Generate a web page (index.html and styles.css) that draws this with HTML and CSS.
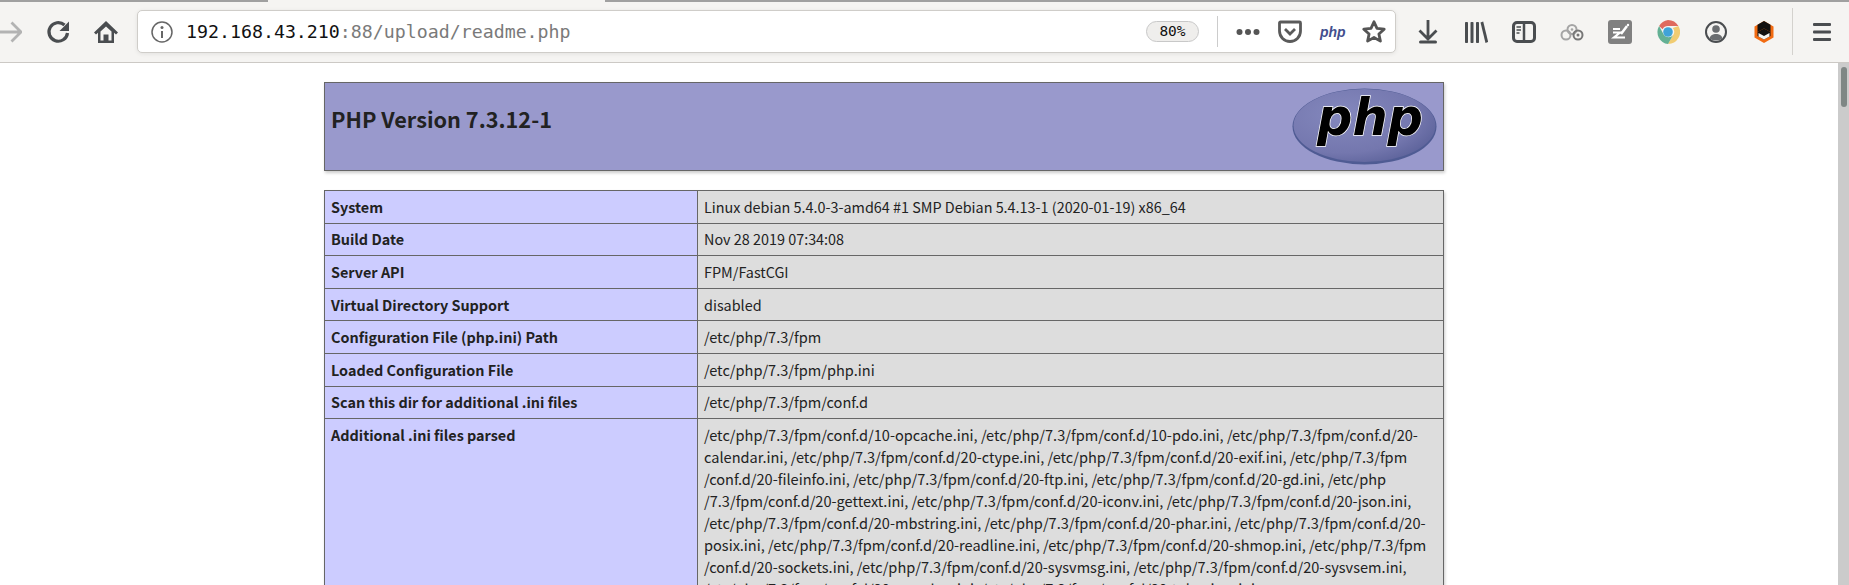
FILE: index.html
```html
<!DOCTYPE html>
<html lang="en">
<head>
    <meta charset="UTF-8">
    <title>phpinfo()</title>
    <link rel="stylesheet" href="styles.css">
</head>
<body>
    <div class="tabline">
        <span class="tabline-left"></span>
        <span class="tabline-gap"></span>
        <span class="tabline-right"></span>
    </div>
    <div class="toolbar">
        <div class="nav">
            <svg class="ico ico-back" viewBox="0 0 24 24"><path d="M0 12h23M13.500 2.500 23 12l-9.500 9.500" fill="none" stroke="#b3b3b3" stroke-width="2.800"/></svg>
            <svg class="ico" viewBox="0 0 24 24"><path d="M21.500 13a9.300 9.300 0 1 1-3-8" fill="none" stroke="#4a4d50" stroke-width="3.200"/><path d="M23 1.500v9.500h-9.500z" fill="#4a4d50"/></svg>
            <svg class="ico" viewBox="0 0 24 24"><path d="M12 1 0 12.500l2 2 2-1.800V23h16v-10.300l2 1.800 2-2z" fill="#4a4d50"/><path d="M12 6.500 6.500 11.500V20.500H9.500V14.500h5V20.500h3V11.500z" fill="#f5f4f2"/><path d="M10.500 15.500h3v5.500h-3z" fill="#4a4d50"/></svg>
        </div>
        <div class="urlbar">
            <svg class="ico" viewBox="0 0 24 24"><circle cx="12" cy="12" r="10" fill="none" stroke="#666" stroke-width="1.500"/><circle cx="12" cy="7.500" r="1.500" fill="#666"/><path d="M12 11v7" stroke="#666" stroke-width="2"/></svg>
            <div class="url"><span class="url-host">192.168.43.210</span>:88/upload/readme.php</div>
            <div class="zoom-pill">80%</div>
            <span class="url-sep"></span>
            <svg class="ico" viewBox="0 0 24 24"><g fill="#555"><circle cx="3.500" cy="12" r="3"/><circle cx="12" cy="12" r="3"/><circle cx="20.500" cy="12" r="3"/></g></svg>
            <svg class="ico" viewBox="0 0 24 24"><path d="M2.500 2h19a1 1 0 0 1 1 1v8a10.500 10.500 0 0 1-21 0V3a1 1 0 0 1 1-1z" fill="none" stroke="#5a5a5a" stroke-width="2.800"/><path d="M7 9l5 5 5-5" fill="none" stroke="#5a5a5a" stroke-width="2.800"/></svg>
            <span class="php-action">php</span>
            <svg class="ico" viewBox="0 0 24 24"><path d="M12 1.800l3 6.600 7.200.8-5.300 4.800 1.500 7.100-6.400-3.600-6.400 3.600 1.500-7.100-5.300-4.800 7.200-.8z" fill="none" stroke="#555" stroke-width="2.800" stroke-linejoin="round"/></svg>
        </div>
        <div class="tools">
            <svg class="ico" viewBox="0 0 24 24"><path d="M12 0v18M3.500 10.500l8.500 8.500 8.500-8.500" fill="none" stroke="#4a4d50" stroke-width="2.800"/><rect x="3" y="20.500" width="18" height="3" rx="1.500" fill="#4a4d50"/></svg>
            <svg class="ico" viewBox="0 0 24 24"><g fill="#4a4d50"><rect x="1" y="2" width="3" height="21" rx=".8"/><rect x="6.500" y="2" width="3" height="21" rx=".8"/><rect x="12" y="2" width="3" height="21" rx=".8"/><path d="M16.500 2.500l2.700-1 5 20.500-2.700 1z"/></g></svg>
            <svg class="ico" viewBox="0 0 24 24"><rect x="1.500" y="2.500" width="21" height="19" rx="3.500" fill="none" stroke="#4a4d50" stroke-width="3"/><path d="M12 3v18" stroke="#4a4d50" stroke-width="2.500"/><path d="M4.500 7h4.500M4.500 10h4.500M4.500 13h3" stroke="#4a4d50" stroke-width="1.500"/></svg>
            <svg class="ico" viewBox="0 0 24 24"><g fill="none" stroke-width="2"><circle cx="6" cy="15" r="4.500" stroke="#a5a5a5"/><circle cx="12" cy="9.500" r="4.500" stroke="#a5a5a5"/><circle cx="18" cy="15" r="4.500" stroke="#777"/></g><circle cx="18" cy="15" r="1.500" fill="#777"/><circle cx="12" cy="9.500" r="1.300" fill="#a5a5a5"/></svg>
            <svg class="ico" viewBox="0 0 24 24"><rect width="24" height="24" rx="3" fill="#808080"/><path d="M5 9h7M5 12.500h7l-6 5h11" fill="none" stroke="#fff" stroke-width="2.200"/><path d="M13 14l6-8" stroke="#fff" stroke-width="2.500"/><circle cx="20" cy="5" r="1.200" fill="#fff"/></svg>
            <svg class="ico" viewBox="0 0 24 24"><path d="M12 0a12 12 0 0 1 10.400 6H12a6 6 0 0 0-5.400 3.300L3.100 6A12 12 0 0 1 12 0z" fill="#df6a5e"/><path d="M22.400 6A12 12 0 0 1 12 24l5.200-9A6 6 0 0 0 16.800 8z" fill="#f1cc72"/><path d="M12 24A12 12 0 0 1 3.100 6l5 9.200A6 6 0 0 0 17 15.300z" fill="#63b094"/><circle cx="12" cy="12" r="4.800" fill="#3fa3d8"/></svg>
            <svg class="ico" viewBox="0 0 24 24"><circle cx="12" cy="12" r="10" fill="none" stroke="#4a4d50" stroke-width="2"/><circle cx="12" cy="9" r="3.800" fill="#6a6d70"/><path d="M5.500 18.500c1-3.500 3.500-4.500 6.500-4.500s5.500 1 6.500 4.500c-3 2.600-10 2.600-13 0z" fill="#6a6d70"/></svg>
            <svg class="ico" viewBox="0 0 24 24"><path d="M12 1l9.500 5.500v11L12 23l-9.500-5.500v-11z" fill="#f26b12"/><path d="M12 1l6.500 3.800V12L12 8.500 5.500 12V4.800z" fill="#111"/><path d="M5.500 12 12 8.500l6.500 3.500v4L12 19.500 5.500 16z" fill="#111"/><path d="M6.500 13 12 16l5.500-3v3.500L12 19.500l-5.500-3z" fill="#f5f4f2"/></svg>
            <span class="tool-sep"></span>
            <svg class="ico" viewBox="0 0 24 24"><g fill="#4a4d50"><rect x="3" y="3" width="18" height="3" rx="1"/><rect x="3" y="10.500" width="18" height="3" rx="1"/><rect x="3" y="18" width="18" height="3" rx="1"/></g></svg>
        </div>
    </div>

    <div class="viewport">
        <div class="center">
            <div class="php-head">
                <h1>PHP Version 7.3.12-1</h1>
                <svg class="php-logo" viewBox="0 0 145 77">
                    <defs>
                        <radialGradient id="logoFill" cx="35%" cy="35%" r="75%">
                            <stop offset="0" stop-color="#8488bd"/>
                            <stop offset=".7" stop-color="#7477ae"/>
                            <stop offset="1" stop-color="#5b6199"/>
                        </radialGradient>
                    </defs>
                    <ellipse cx="72.500" cy="38.500" rx="72" ry="38" fill="#4f5b93"/>
                    <ellipse cx="72.500" cy="37.500" rx="71" ry="36.500" fill="url(#logoFill)"/>
                    <text class="php-mark" x="25" y="47" textLength="106" lengthAdjust="spacingAndGlyphs">php</text>
                </svg>
            </div>
            <table class="info">
                <tr><td class="e">System</td><td class="v">Linux debian 5.4.0-3-amd64 #1 SMP Debian 5.4.13-1 (2020-01-19) x86_64</td></tr>
                <tr><td class="e">Build Date</td><td class="v">Nov 28 2019 07:34:08</td></tr>
                <tr><td class="e">Server API</td><td class="v">FPM/FastCGI</td></tr>
                <tr><td class="e">Virtual Directory Support</td><td class="v">disabled</td></tr>
                <tr><td class="e">Configuration File (php.ini) Path</td><td class="v path">/etc/php/7.3/fpm</td></tr>
                <tr><td class="e">Loaded Configuration File</td><td class="v path">/etc/php/7.3/fpm/php.ini</td></tr>
                <tr><td class="e">Scan this dir for additional .ini files</td><td class="v path">/etc/php/7.3/fpm/conf.d</td></tr>
                <tr>
                    <td class="e">Additional .ini files parsed</td>
                    <td class="v path">/etc/php/7.3/fpm/conf.d/10-opcache.ini, /etc/php/7.3/fpm/conf.d/10-pdo.ini, /etc/php/7.3/fpm/conf.d/20-<br>calendar.ini, /etc/php/7.3/fpm/conf.d/20-ctype.ini, /etc/php/7.3/fpm/conf.d/20-exif.ini, /etc/php/7.3/fpm<br>/conf.d/20-fileinfo.ini, /etc/php/7.3/fpm/conf.d/20-ftp.ini, /etc/php/7.3/fpm/conf.d/20-gd.ini, /etc/php<br>/7.3/fpm/conf.d/20-gettext.ini, /etc/php/7.3/fpm/conf.d/20-iconv.ini, /etc/php/7.3/fpm/conf.d/20-json.ini,<br>/etc/php/7.3/fpm/conf.d/20-mbstring.ini, /etc/php/7.3/fpm/conf.d/20-phar.ini, /etc/php/7.3/fpm/conf.d/20-<br>posix.ini, /etc/php/7.3/fpm/conf.d/20-readline.ini, /etc/php/7.3/fpm/conf.d/20-shmop.ini, /etc/php/7.3/fpm<br>/conf.d/20-sockets.ini, /etc/php/7.3/fpm/conf.d/20-sysvmsg.ini, /etc/php/7.3/fpm/conf.d/20-sysvsem.ini,<br>/etc/php/7.3/fpm/conf.d/20-sysvshm.ini, /etc/php/7.3/fpm/conf.d/20-tokenizer.ini,</td>
                </tr>
            </table>
        </div>
        <div class="scrollbar"><div class="scrollbar-thumb"></div></div>
    </div>
</body>
</html>
```

FILE: styles.css
```css
*{
    margin: 0;
    padding: 0;
    box-sizing: border-box;
}

html, body{
    height: 585px;
    overflow: hidden;
}

body{
    background: #fff;
    color: #222;
    font-family: "Noto Sans CJK SC", "Noto Sans", sans-serif;
}

.tabline{
    display: flex;
    height: 2px;
    background: #f5f4f2;
}

.tabline-left{
    width: 268px;
    background: #a0a0a0;
}

.tabline-gap{
    width: 337px;
}

.tabline-right{
    flex: 1;
    background: #a0a0a0;
}

.toolbar{
    display: flex;
    align-items: center;
    height: 61px;
    padding-bottom: 1px;
    background: #f5f4f2;
    border-bottom: 1px solid #ccc9c5;
}

.ico{
    display: block;
    flex: none;
    width: 24px;
    height: 24px;
}

.nav{
    display: flex;
    gap: 24px;
    width: 138px;
    margin-left: -2px;
    flex: none;
}

.urlbar{
    display: flex;
    align-items: center;
    gap: 18px;
    width: 1259px;
    height: 43px;
    padding: 0 9px 0 12px;
    background: #fff;
    border: 1px solid #cfcdc9;
    border-radius: 5px;
    box-shadow: 0 1px 4px rgba(0, 0, 0, 0.08);
    flex: none;
    margin-left: 1px;
}

.url{
    flex: 1;
    margin-left: -6px;
    font-family: "DejaVu Sans Mono", monospace;
    font-size: 18.25px;
    color: #7a7a7a;
    white-space: nowrap;
}

.url-host{
    color: #111;
}

.zoom-pill{
    width: 53px;
    height: 21px;
    background: #efeeec;
    border: 1px solid #c8c8c8;
    border-radius: 11px;
    font-family: "DejaVu Sans Mono", monospace;
    font-size: 14.5px;
    line-height: 19px;
    text-align: center;
    color: #111;
}

.url-sep{
    width: 1px;
    height: 31px;
    background: #ccc;
}

.php-action{
    width: 24px;
    font-family: "Liberation Sans", sans-serif;
    font-size: 14px;
    font-style: italic;
    font-weight: bold;
    text-align: center;
    color: #434f8e;
}

.tools{
    display: flex;
    align-items: center;
    gap: 24px;
    margin-left: 20px;
}

.tool-sep{
    width: 1px;
    height: 47px;
    margin: 0 -7px 0 -8px;
    background: #d4d2ce;
}

.viewport{
    display: flex;
    height: 522px;
    overflow: hidden;
}

.center{
    flex: 1;
    padding: 19px 0 0 324px;
}

.php-head{
    display: flex;
    justify-content: space-between;
    align-items: center;
    width: 1120px;
    height: 89px;
    padding: 0 6px 0 6px;
    background: #99c;
    border: 1px solid #666;
    box-shadow: 1px 2px 3px #ccc;
}

.php-head h1{
    margin-bottom: 16px;
    font-size: 21.7px;
    line-height: 30px;
    font-weight: bold;
}

.php-logo{
    display: block;
    width: 145px;
    height: 77px;
    overflow: visible;
}

.php-mark{
    font-family: "DejaVu Sans", sans-serif;
    font-size: 52px;
    font-weight: bold;
    font-style: italic;
    fill: #000;
    stroke: #fff;
    stroke-width: 1.5px;
    paint-order: stroke;
}

.info{
    width: 1120px;
    margin-top: 19px;
    border-collapse: collapse;
    table-layout: fixed;
    box-shadow: 1px 2px 3px #ccc;
    font-size: 14.4px;
    line-height: 22px;
}

.info td{
    padding: 4.8px 6px;
    border: 1px solid #666;
    vertical-align: top;
}

.e{
    width: 373px;
    background: #ccf;
    font-weight: bold;
}

.v{
    background: #ddd;
    white-space: nowrap;
}

.info .path{
    font-size: 14.57px;
}

.scrollbar{
    flex: none;
    width: 11px;
    padding: 4px 2px 0 3px;
    background: #cbcbcb;
}

.scrollbar-thumb{
    height: 40px;
    background: #7f8785;
    border-radius: 3px;
}
```
